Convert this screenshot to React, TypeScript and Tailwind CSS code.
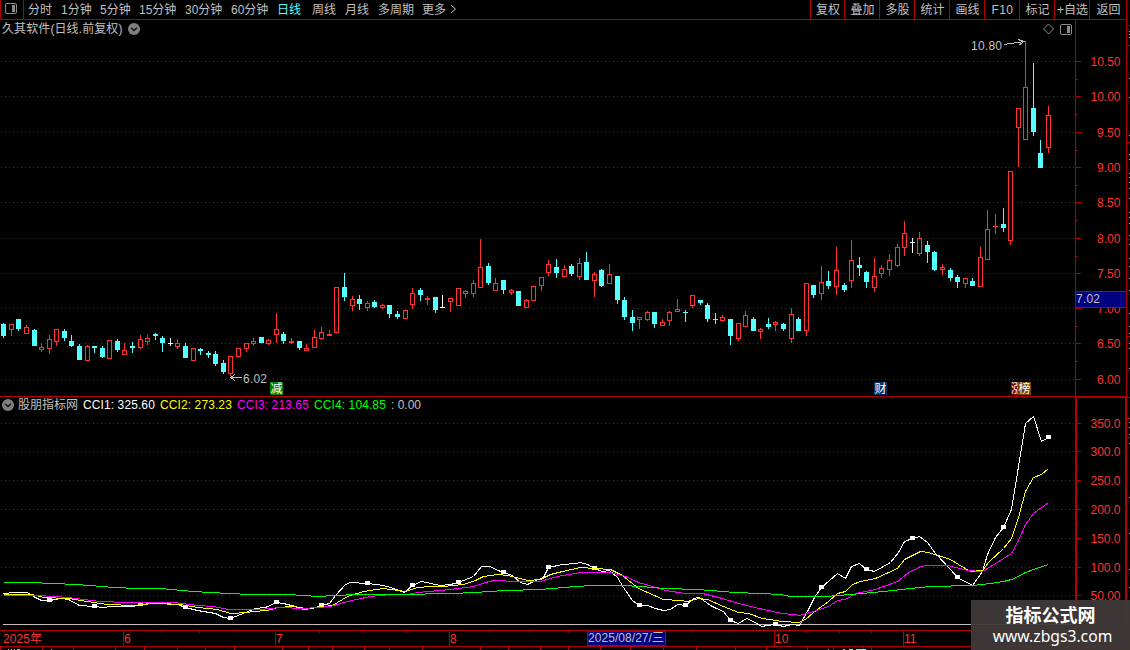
import React from 'react';

type Kind = 'up' | 'down' | 'flat';
type Candle = [Kind, number, number, number, number];

// kind, high, body top, body bottom, low
const candles: Candle[] = [
  ['down', 323, 324, 336, 338], ['up', 324, 324, 330, 336], ['down', 319, 319, 329, 331],
  ['up', 325, 327, 334, 334], ['down', 329, 330, 346, 346], ['up', 343, 347, 350, 352],
  ['up', 335, 339, 349, 354], ['up', 329, 329, 342, 346], ['down', 329, 331, 338, 341],
  ['down', 335, 341, 346, 347], ['down', 344, 346, 360, 360], ['up', 345, 346, 361, 361],
  ['down', 346, 346, 348, 353], ['down', 346, 348, 357, 358], ['up', 340, 340, 359, 359],
  ['down', 339, 341, 350, 352], ['up', 343, 350, 355, 355], ['down', 342, 346, 348, 353],
  ['up', 335, 339, 348, 349], ['up', 335, 338, 342, 345], ['down', 333, 334, 336, 340],
  ['down', 336, 338, 343, 352], ['flat', 338, 343, 344, 346], ['up', 339, 343, 347, 349],
  ['down', 343, 346, 358, 358], ['up', 348, 348, 361, 361], ['down', 348, 349, 351, 355],
  ['down', 351, 353, 355, 358], ['down', 351, 354, 364, 366], ['down', 360, 363, 372, 374],
  ['up', 356, 356, 374, 376], ['up', 348, 348, 357, 358], ['up', 343, 343, 349, 352],
  ['up', 338, 341, 344, 346], ['down', 337, 337, 343, 343], ['up', 339, 340, 344, 345],
  ['up', 313, 329, 335, 343], ['down', 332, 334, 341, 344], ['up', 338, 341, 343, 344],
  ['down', 341, 341, 348, 350], ['up', 344, 348, 351, 351], ['up', 330, 337, 348, 348],
  ['up', 327, 332, 339, 340], ['up', 330, 334, 336, 336], ['up', 287, 287, 333, 333],
  ['down', 273, 287, 297, 301], ['up', 296, 299, 306, 311], ['down', 295, 299, 304, 310],
  ['up', 301, 303, 308, 311], ['down', 300, 302, 307, 308], ['up', 304, 305, 308, 309],
  ['down', 305, 305, 314, 318], ['down', 311, 314, 317, 319], ['up', 310, 310, 319, 319],
  ['up', 288, 293, 305, 309], ['down', 288, 290, 295, 301], ['up', 296, 298, 300, 305],
  ['down', 297, 297, 310, 313], ['flat', 295, 307, 308, 308], ['up', 298, 298, 302, 312],
  ['up', 288, 288, 306, 306], ['up', 290, 291, 294, 298], ['up', 280, 283, 294, 297],
  ['up', 239, 267, 288, 288], ['down', 263, 266, 283, 285], ['up', 278, 283, 291, 291],
  ['down', 280, 280, 290, 294], ['up', 289, 290, 293, 295], ['down', 291, 291, 306, 306],
  ['up', 299, 300, 308, 308], ['up', 286, 286, 301, 301], ['up', 277, 277, 286, 291],
  ['up', 260, 264, 273, 276], ['down', 259, 267, 273, 278], ['up', 265, 269, 277, 277],
  ['down', 264, 266, 274, 276], ['up', 258, 263, 277, 280], ['down', 252, 262, 280, 280],
  ['up', 272, 274, 281, 297], ['down', 269, 270, 286, 287], ['up', 264, 274, 284, 284],
  ['down', 276, 276, 300, 304], ['down', 297, 300, 317, 320], ['down', 310, 317, 323, 331],
  ['up', 317, 317, 320, 329], ['up', 311, 312, 320, 321], ['down', 312, 312, 324, 328],
  ['up', 319, 322, 326, 326], ['up', 311, 312, 321, 326], ['up', 299, 309, 312, 312],
  ['down', 310, 312, 313, 322], ['up', 295, 295, 306, 308], ['down', 300, 300, 303, 305],
  ['down', 303, 305, 319, 322], ['down', 313, 319, 320, 324], ['up', 315, 317, 321, 322],
  ['down', 319, 319, 336, 345], ['up', 323, 323, 339, 341], ['up', 311, 315, 327, 327],
  ['down', 317, 319, 331, 331], ['up', 328, 329, 332, 339], ['down', 318, 324, 327, 329],
  ['up', 321, 322, 325, 331], ['down', 323, 324, 329, 331], ['up', 308, 314, 339, 343],
  ['down', 317, 319, 331, 331], ['up', 283, 283, 331, 336], ['down', 285, 285, 295, 298],
  ['up', 266, 282, 294, 300], ['down', 271, 281, 286, 289], ['up', 247, 270, 287, 295],
  ['down', 283, 285, 290, 292], ['up', 240, 260, 281, 288], ['down', 257, 265, 268, 276],
  ['down', 271, 272, 282, 288], ['up', 258, 276, 288, 292], ['up', 265, 268, 274, 278],
  ['up', 254, 260, 270, 276], ['up', 244, 247, 266, 267], ['up', 221, 233, 248, 256],
  ['flat', 238, 242, 243, 253], ['up', 232, 238, 254, 256], ['down', 241, 245, 252, 263],
  ['down', 251, 252, 270, 271], ['up', 264, 267, 270, 275], ['down', 268, 270, 278, 281],
  ['down', 275, 277, 282, 288], ['up', 278, 278, 284, 288], ['down', 278, 281, 286, 286],
  ['up', 247, 257, 287, 287], ['up', 210, 229, 260, 260], ['up', 214, 226, 227, 234],
  ['down', 208, 224, 228, 232], ['up', 171, 171, 241, 245], ['up', 108, 108, 128, 167],
  ['up', 41, 87, 140, 140], ['down', 63, 108, 132, 136], ['down', 140, 153, 168, 168],
  ['up', 106, 115, 148, 153],
];

const cci1 =
  '3,593 15,592 27,592 33,596 41,600 49,600 61,598 68,599 79,605 94,606 103,607 110,606 132,606 142,604 155,602 163,603 177,604 185,607 197,610 215,613 223,617 230,618 240,614 255,608 265,607 276,602 283,603 295,606 303,609 312,608 321,605 329,603 335,595 345,584 350,582 367,583 383,585 390,587 404,592 412,585 421,581 440,585 450,584 458,582 473,576 481,566 490,566 495,569 503,572 512,575 520,582 527,584 533,581 543,577 548,567 562,564 575,563 580,562 587,564 594,568 602,571 609,570 617,577 623,587 632,600 639,605 647,605 655,608 663,610 670,609 677,604 685,605 693,598 699,597 710,605 716,608 723,611 730,620 738,623 746,618 753,621 761,626 767,625 775,624 783,626 791,624 799,625 807,611 814,597 821,587 829,580 837,573 845,578 851,566 859,563 866,569 874,571 890,562 898,552 904,541 912,538 919,536 927,542 935,553 950,569 957,577 972,585 982,571 987,554 995,537 1003,527 1011,509 1018,466 1025,423 1033,416 1041,441 1048,437';
const cci2 =
  '3,594 32,594 43,597 68,598 80,600 107,604 133,605 152,603 180,604 197,607 217,609 230,613 247,612 253,611 267,610 277,607 293,606 305,608 332,605 347,596 363,591 383,588 405,591 417,587 430,586 443,586 463,584 475,580 483,576 497,574 508,575 527,580 540,579 550,574 562,571 580,567 610,569 622,575 638,588 663,599 680,600 687,601 698,598 707,599 723,606 738,612 748,613 762,618 782,621 798,622 805,619 813,612 828,601 837,593 845,591 852,584 860,581 875,578 897,568 904,559 920,551 928,552 950,559 958,564 970,571 982,570 988,562 1003,548 1011,538 1018,517 1025,491 1033,477 1041,474 1048,468';
const cci3 =
  '3,595 37,595 53,596 67,597 75,598 100,601 127,602 173,602 197,605 213,606 228,609 260,609 280,607 303,608 330,606 347,601 370,596 390,594 407,594 417,592 450,589 473,586 485,582 493,580 518,581 530,581 540,581 557,576 580,572 610,572 625,576 638,582 652,586 665,590 685,593 702,593 722,598 738,603 763,609 782,613 793,614 799,615 813,611 828,606 837,600 845,599 855,593 875,589 897,581 907,573 920,566 927,565 948,565 967,570 982,571 995,563 1011,553 1018,540 1025,524 1033,513 1048,502';
const cci4 =
  '3,582 30,582 53,583 75,584 90,585 113,587 138,588 160,588 193,591 228,593 250,594 288,594 318,596 333,595 358,594 400,594 450,593 475,592 488,591 505,590 540,589 575,586 592,585 622,585 640,586 665,588 697,589 735,592 760,593 780,594 790,596 825,596 850,594 883,591 910,588 930,586 972,585 990,583 1003,581 1011,579 1018,576 1025,572 1033,569 1048,564';

const markers = [
  [49, 600], [94, 606], [140, 604], [185, 607], [230, 618], [276, 602], [321, 605],
  [367, 583], [412, 585], [458, 582], [503, 572], [548, 567], [594, 568],
  [639, 605], [685, 605], [730, 620], [775, 624], [821, 587], [866, 569],
  [912, 538], [957, 577], [1003, 527], [1048, 437],
];

const priceLevels = [
  { y: 61, label: '10.50' },
  { y: 96, label: '10.00' },
  { y: 132, label: '9.50' },
  { y: 167, label: '9.00' },
  { y: 202, label: '8.50' },
  { y: 238, label: '8.00' },
  { y: 273, label: '7.50' },
  { y: 308, label: '7.00' },
  { y: 343, label: '6.50' },
  { y: 379, label: '6.00' },
];

const cciLevels = [
  { y: 423, label: '350.0' },
  { y: 451, label: '300.0' },
  { y: 480, label: '250.0' },
  { y: 509, label: '200.0' },
  { y: 538, label: '150.0' },
  { y: 567, label: '100.0' },
  { y: 595, label: '50.00' },
];

const months = [
  { x: 123, label: '6' },
  { x: 275, label: '7' },
  { x: 449, label: '8' },
  { x: 774, label: '10' },
  { x: 903, label: '11' },
];

const weekTicks = [161, 199, 237, 319, 362, 406, 489, 529, 568, 691, 733, 806, 839, 871];
const bottomTicks = [
  0, 42, 73, 115, 144, 177, 205, 234, 282, 308, 332, 364, 389, 422, 480, 508,
  540, 568, 600, 630, 663, 696, 735, 766, 807, 833, 863, 871,
];

function PanelIcon() {
  return (
    <svg width="12" height="11" viewBox="0 0 12 11" className="shrink-0">
      <rect x="0.5" y="0.5" width="11" height="10" rx="1.5" fill="none" stroke="#8c8c8c" />
      <rect x="7" y="2" width="3" height="7" fill="#8c8c8c" />
    </svg>
  );
}

function DropdownBadge() {
  return (
    <svg width="12" height="12" viewBox="0 0 12 12" className="shrink-0">
      <circle cx="6" cy="6" r="6" fill="#808080" />
      <path d="M3 4.8 L6 7.6 L9 4.8" fill="none" stroke="#101010" strokeWidth="1.4" />
    </svg>
  );
}

function Toolbar() {
  const periods = [
    { label: '分时', className: 'w-[33px]' },
    { label: '1分钟', className: 'w-[39px]' },
    { label: '5分钟', className: 'w-[39px]' },
    { label: '15分钟', className: 'w-[46px]' },
    { label: '30分钟', className: 'w-[46px]' },
    { label: '60分钟', className: 'w-[46px]' },
    { label: '日线', className: 'w-[35px] text-[#54ffff]' },
    { label: '周线', className: 'w-[33px]' },
    { label: '月线', className: 'w-[33px]' },
    { label: '多周期', className: 'w-[44px]' },
    { label: '更多', className: 'w-[28px]' },
  ];
  const tools = [
    { label: '复权', className: 'w-[34px]' },
    { label: '叠加', className: 'w-[35px]' },
    { label: '多股', className: 'w-[35px]' },
    { label: '统计', className: 'w-[35px]' },
    { label: '画线', className: 'w-[35px]' },
    { label: 'F10', className: 'w-[35px] tracking-[0.4px]' },
    { label: '标记', className: 'w-[35px]' },
    { label: '+自选', className: 'w-[35px]' },
    { label: '返回', className: 'w-[37px]' },
  ];
  return (
    <div className="flex h-5 shrink-0 border-x border-b border-[#b00000]">
      <div className="flex w-[23px] items-center border-r border-[#b00000] pb-[2px] pl-1">
        <PanelIcon />
      </div>
      <div className="flex flex-1 items-center pl-1">
        {periods.map((p) => (
          <span key={p.label} className={p.className}>
            {p.label}
          </span>
        ))}
        <svg width="7" height="10" viewBox="0 0 7 10" className="mb-[2px]">
          <path d="M1 1 L5.5 5 L1 9" fill="none" stroke="#c0c0c0" />
        </svg>
      </div>
      {tools.map((t) => (
        <div key={t.label} className="flex border-l border-[#b00000]">
          <span className={`flex items-center justify-center ${t.className} -mr-px`}>
            {t.label}
          </span>
        </div>
      ))}
    </div>
  );
}

function GridRow(props: { y: number; label: string }) {
  const { y, label } = props;
  return (
    <g>
      <line x1="1" x2="1075" y1={y + 0.5} y2={y + 0.5} stroke="#b00000" strokeDasharray="1 3" />
      <rect x="1076" y={y} width="5" height="1" fill="#b00000" />
      <text x="1120.5" y={y + 5} textAnchor="end" fill="#ff3232" textLength={label.length === 5 ? 30 : 23.5}>
        {label}
      </text>
    </g>
  );
}

function CandleBar(props: { candle: Candle; index: number }) {
  const [kind, high, top, bottom, low] = props.candle;
  const x = Math.round(3.33 + 7.57 * props.index);
  if (kind === 'up' && bottom - top > 2) {
    return (
      <g fill="#ff3232">
        <rect x={x} y={high} width="1" height={top - high} />
        <rect x={x} y={bottom} width="1" height={low - bottom} />
        <rect x={x - 2} y={top} width="5" height={bottom - top} />
        <rect x={x - 1} y={top + 1} width="3" height={bottom - top - 2} fill="#000" />
      </g>
    );
  }
  const color = kind === 'up' ? '#ff3232' : kind === 'down' ? '#54ffff' : '#ffffff';
  return (
    <g fill={color}>
      <rect x={x} y={high} width="1" height={low - high} />
      <rect x={x - 2} y={top} width="5" height={bottom - top} />
    </g>
  );
}

function PricePane() {
  return (
    <>
      <div className="flex h-[17px] shrink-0">
        <div className="flex w-[1076px] items-center border-r border-[#b00000] pl-[2px]">
          <span className="mt-px mr-[6px] w-[120px] whitespace-nowrap tracking-[0.1px]">
            久其软件(日线.前复权)
          </span>
          <DropdownBadge />
          <span className="flex-1" />
          <svg width="12" height="12" viewBox="0 0 12 12" className="mt-px mr-[6px]">
            <path d="M6.5 1 L11.5 6 L6.5 11 L1.5 6 Z" fill="none" stroke="#8c8c8c" />
          </svg>
          <span className="mt-[2px] mr-[3px]">
            <PanelIcon />
          </span>
        </div>
        <div className="w-[51px] border-r border-[#b00000]" />
      </div>
      <svg width="1127" height="360" viewBox="0 37 1127 360" shapeRendering="crispEdges" className="block shrink-0">
        {priceLevels.map((l) => (
          <GridRow key={l.label} y={l.y} label={l.label} />
        ))}
        {priceLevels.slice(0, -1).map((l) => (
          <rect key={l.y} x="1076" y={l.y + 18} width="2" height="1" fill="#b00000" />
        ))}
        <rect x="1075" y="37" width="1" height="360" fill="#b00000" />
        <rect x="1126" y="37" width="1" height="360" fill="#b00000" />
        <rect x="0" y="396" width="1127" height="1" fill="#b00000" />

        {candles.map((c, i) => (
          <CandleBar key={i} candle={c} index={i} />
        ))}

        <g fill="none" stroke="#c0c0c0">
          <path d="M231 377.5 H242 M235 374 L231 377.5 L235 381" />
          <path d="M1004 44.5 L1024 41.5 M1018 39.5 L1024 41.5 L1019 45" />
        </g>
        <text x="243" y="383" fill="#c0c0c0" textLength="24">6.02</text>
        <text x="971" y="50" fill="#c0c0c0" textLength="31">10.80</text>

        <rect x="1076" y="291" width="50" height="17" fill="#000080" />
        <rect x="1076" y="291" width="50" height="1" fill="#b00000" />
        <rect x="1076" y="307" width="50" height="1" fill="#b00000" />
        <text x="1076" y="303" fill="#c0c0c0" textLength="24">7.02</text>

        <rect x="270" y="382" width="13" height="13" fill="#008000" />
        <rect x="874" y="382" width="13" height="13" fill="#003468" />
        <rect x="1011" y="382" width="7" height="13" fill="#800000" />
        <g fill="#fff">
          <text x="270.5" y="393">减</text>
          <text x="874.5" y="393">财</text>
          <text x="1011" y="393">涨</text>
        </g>
        <rect x="1018" y="382" width="13" height="13" fill="#804000" />
        <text x="1018.5" y="393" fill="#fff">榜</text>
      </svg>
    </>
  );
}

function CciPane() {
  return (
    <>
      <div className="flex h-4 shrink-0">
        <div className="flex w-[1077px] items-center whitespace-nowrap border-r-2 border-[#b00000] pl-[2px]">
          <DropdownBadge />
          <span className="ml-[4px] w-[65px]">股朋指标网</span>
          <span className="w-[77px] tracking-[0.1px] text-white">CCI1: 325.60</span>
          <span className="w-[77px] tracking-[0.1px] text-[#ffff00]">CCI2: 273.23</span>
          <span className="w-[77px] tracking-[0.1px] text-[#ff00ff]">CCI3: 213.65</span>
          <span className="w-[77px] tracking-[0.1px] text-[#00ff00]">CCI4: 104.85</span>
          <span>: 0.00</span>
        </div>
        <div className="w-[50px] border-t border-r-2 border-[#b00000]" />
      </div>
      <svg width="1127" height="217" viewBox="0 413 1127 217" shapeRendering="crispEdges" className="block shrink-0">
        {cciLevels.map((l) => (
          <GridRow key={l.label} y={l.y} label={l.label} />
        ))}
        {cciLevels.map((l) => (
          <rect key={l.y} x="1077" y={l.y + 14} width="1" height="1" fill="#b00000" />
        ))}
        <rect x="1075" y="413" width="2" height="217" fill="#b00000" />
        <rect x="1125" y="413" width="2" height="217" fill="#b00000" />
        <rect x="3" y="624" width="1072" height="1" fill="#c0c0c0" />
        <g fill="none" transform="translate(0.5 0.5)">
          <polyline points={cci1} stroke="#ffffff" />
          {markers.map(([x, y]) => (
            <rect key={x} x={x - 2.5} y={y - 2.5} width="5" height="4" fill="#ffffff" />
          ))}
          <polyline points={cci2} stroke="#ffff00" />
          <polyline points={cci3} stroke="#ff00ff" />
          <polyline points={cci4} stroke="#00ff00" />
        </g>
      </svg>
    </>
  );
}

function TimeAxis() {
  return (
    <svg width="1127" height="20" viewBox="0 630 1127 20" shapeRendering="crispEdges" className="block shrink-0">
      <g fill="#b00000">
        <rect x="0" y="630" width="1127" height="1" />
        <rect x="0" y="646" width="1127" height="1" />
        {months.map((m) => (
          <rect key={m.x} x={m.x} y="630" width="1" height="16" />
        ))}
        {weekTicks.map((x) => (
          <rect key={x} x={x} y="631" width="1" height="2" />
        ))}
        {bottomTicks.map((x) => (
          <rect key={x} x={x} y="647" width="1" height="3" />
        ))}
      </g>
      <g fill="#ff3232">
        <text x="3" y="643" textLength="39">2025年</text>
        {months.map((m) => (
          <text key={m.x} x={m.x + 1} y="643">{m.label}</text>
        ))}
      </g>
      <rect x="587.5" y="631.5" width="78" height="14" fill="#000080" stroke="#b00000" />
      <text x="588" y="642" fill="#c0c0c0" textLength="76">2025/08/27/三</text>
      <path d="M8 649.5 H9 M11 649.5 H12 M14 649.5 H15 M17 649.5 H20 M51 649.5 H52 M828 649.5 H829 M843 649.5 H845" stroke="#c0c0c0" />
      <path d="M849 649.5 H853 M856 649.5 H866" stroke="#54ffff" />
    </svg>
  );
}

// Left edge of the neighbouring quote panel
function SideEdge() {
  const rows = [25, 45, 142, 239, 336, 397, 418, 437];
  const dots = [
    31, 34, 37, 78, 97, 135, 154, 159, 173, 177, 182, 188, 198, 212, 217, 223,
    235, 244, 258, 266, 278, 290, 313, 326, 333, 343, 348, 368, 422, 427, 434,
    443, 497, 533, 569, 587,
  ];
  return (
    <svg width="3" height="650" viewBox="1127 0 3 650" shapeRendering="crispEdges" className="block">
      {rows.map((y) => (
        <rect key={y} x="1127" y={y} width="3" height="1" fill="#b00000" />
      ))}
      {dots.map((y) => (
        <rect key={y} x="1129" y={y} width="1" height="1" fill="#c0c0c0" />
      ))}
    </svg>
  );
}

export default function App() {
  return (
    <div className="relative flex h-[650px] w-[1130px] overflow-hidden bg-black font-['Liberation_Sans','Noto_Sans_CJK_SC',sans-serif] text-[12px] leading-none text-[#c0c0c0]">
      <div className="flex w-[1127px] flex-col">
        <Toolbar />
        <PricePane />
        <CciPane />
        <TimeAxis />
      </div>
      <SideEdge />
      <div className="absolute right-0 bottom-0 flex h-[50px] w-[159px] flex-col items-center bg-[#3f3939]/95 pt-[7px] text-white">
        <span className="text-[18px] leading-[18px] font-bold">指标公式网</span>
        <span className="mt-[2px] ml-[4px] font-['Noto_Sans','Open_Sans',sans-serif] text-[15.7px] leading-[18px]">
          www.zbgs3.com
        </span>
      </div>
    </div>
  );
}
